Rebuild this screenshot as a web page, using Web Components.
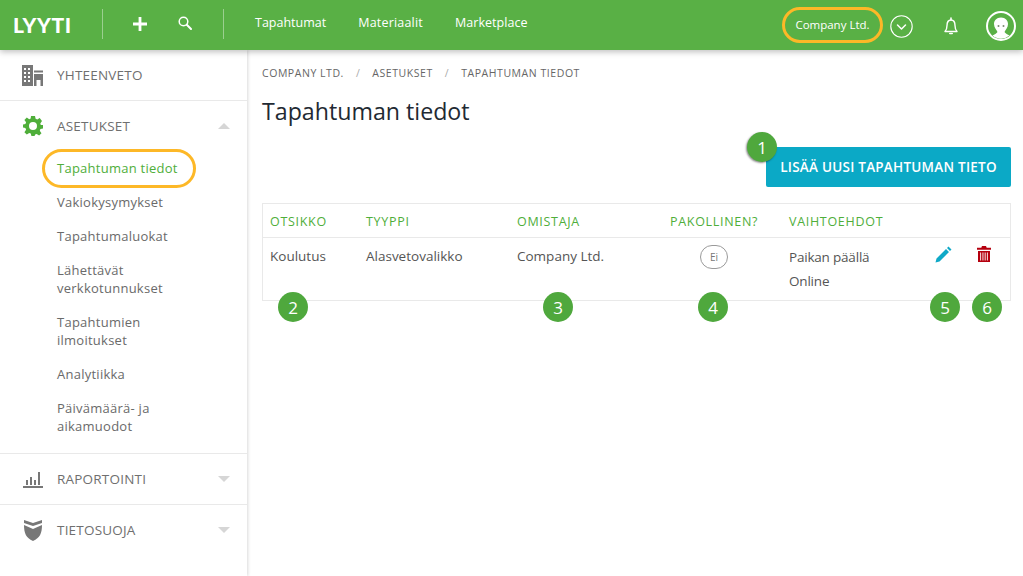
<!DOCTYPE html>
<html lang="fi"><head><meta charset="utf-8"><title>Tapahtuman tiedot</title>
<style>
html,body{margin:0;height:100%;background:#fff}
body{font-family:"Open Sans","Noto Sans","Liberation Sans",sans-serif;overflow:hidden}
</style></head><body>
<ly-app>
  <ly-topbar slot="top"></ly-topbar>
  <ly-sidebar slot="side"></ly-sidebar>
  <ly-main slot="main"></ly-main>
</ly-app>
<script>
const FONT='"Open Sans","Noto Sans","Liberation Sans",sans-serif';
function def(name,html,setup){
  customElements.define(name,class extends HTMLElement{
    constructor(){super();this.attachShadow({mode:'open'}).innerHTML=typeof html==='function'?html(this):html;}
    connectedCallback(){if(setup)setup(this);}
  });
}
def('ly-app',`<style>
:host{display:grid;grid-template-columns:247px 1fr;grid-template-rows:50px 1fr;height:576px;width:1023px;overflow:hidden}
.t{grid-column:1/3;position:relative;z-index:2}
.s{position:relative;z-index:1}
</style>
<div class="t"><slot name="top"></slot></div>
<div class="s"><slot name="side"></slot></div>
<div><slot name="main"></slot></div>`);

def('ly-topbar',`<style>
:host{display:flex;align-items:center;height:50px;background:#59b045;color:#fff;box-shadow:0 2px 6px rgba(0,0,0,.25);font:500 12.500px ${FONT}}
.logo{font:900 21px "Lato",sans-serif;letter-spacing:.6px;margin-left:13px;width:89px;line-height:1;padding-bottom:2px}
.sep{width:1px;height:30px;background:rgba(255,255,255,.4);margin-top:-2px}
.plus{margin-left:30px;display:flex;margin-top:-2px}
.search{margin-left:31px;display:flex;margin-top:-4px}
.sep2{margin-left:31px}
nav{display:flex;gap:32px;margin-left:31px;margin-top:-6px}
nav span:nth-child(2){letter-spacing:.2px}
nav span:nth-child(3){letter-spacing:.05px}
.co{margin-left:auto;box-sizing:border-box;width:101px;height:36px;border:3px solid #fdb827;border-radius:18px;display:flex;align-items:center;justify-content:center;padding-bottom:2px;font-size:11.500px;white-space:nowrap}
.chev{margin-left:7px;display:flex;margin-top:2px}
.bell{margin-left:31px;display:flex;margin-top:2px}
.ava{margin-left:28px;margin-right:7px;display:flex;margin-top:2px}
</style>
<div class="logo">LYYTI</div><div class="sep"></div>
<div class="plus"><svg width="14" height="14" viewBox="0 0 14 14"><path d="M5.6 0h2.8v5.6H14v2.8H8.400V14H5.600V8.400H0V5.600h5.600z" fill="#fff"/></svg></div>
<div class="search"><svg width="14" height="14" viewBox="0 0 14 14" fill="none" stroke="#fff"><circle cx="5.500" cy="5.500" r="4.300" stroke-width="1.500"/><path d="M8.800 8.800l4.200 4.200" stroke-width="2" stroke-linecap="round"/></svg></div>
<div class="sep sep2"></div>
<nav><span>Tapahtumat</span><span>Materiaalit</span><span>Marketplace</span></nav>
<div class="co">Company Ltd.</div>
<div class="chev"><svg width="23" height="23" viewBox="0 0 23 23" fill="none" stroke="#fff"><circle cx="11.500" cy="11.500" r="10.700" stroke-width="1.100"/><path d="M7.500 10l4 4 4-4" stroke-width="1.500" stroke-linecap="round" stroke-linejoin="round"/></svg></div>
<div class="bell"><svg width="14" height="18" viewBox="0 0 14 18" fill="none" stroke="#fff" stroke-width="1.400"><path d="M1 14.500c1.500-1.500 2-2.500 2-6C3 5.500 4.500 3 7 3s4 2.500 4 5.500c0 3.500.5 4.500 2 6z" stroke-linejoin="round"/><path d="M7 1v2M5.800 16.500h2.400" stroke-linecap="round" stroke-width="1.600"/></svg></div>
<div class="ava"><svg width="30" height="30" viewBox="0 0 30 30"><circle cx="15" cy="15" r="14" fill="#59b045" stroke="#fff" stroke-width="2"/><path d="M15 6.500c4.500 0 7 3 7 6.500 0 3.500-2.500 5.500-3.500 8 1 1.500 3 2.500 5 3.500a13 13 0 0 1-17 0c2-1 4-2 5-3.500-1-2.500-3.500-4.500-3.500-8 0-3.500 2.500-6.500 7-6.500z" fill="#fff"/><circle cx="12.500" cy="15" r="1" fill="#7a8a70"/><circle cx="17.500" cy="15" r="1" fill="#7a8a70"/></svg></div>`);

def('ly-navgroup',h=>`<style>
:host{display:block;border-bottom:1px solid #e9e9e9;color:#6f6f6f}
.row{display:flex;align-items:center;height:50px;padding-left:22px;font:400 13.500px ${FONT};letter-spacing:.2px}
.ic{width:21px;height:21px;display:flex;align-items:center;justify-content:center;margin-right:14px}
.lab{flex:1}
.car{width:0;height:0;border-left:6px solid transparent;border-right:6px solid transparent;margin-right:17px}
.car.d{border-top:6px solid #d6d6d6}
.car.u{border-bottom:6px solid #d6d6d6}
.car.n{display:none}
</style>
<div class="row"><span class="ic"><slot name="icon"></slot></span><span class="lab">${h.getAttribute('label')}</span><span class="car ${h.getAttribute('caret')||'n'}"></span></div>
<slot></slot>`);

def('ly-subitem',h=>`<style>
:host{display:block;padding:8px 0 8px 57px;font:400 13px/18px ${FONT};letter-spacing:.25px;color:#6a6a6a}
:host([active]){color:#4fae3a;padding:8px 0 8px 57px;position:relative}
.ring{display:none;position:absolute;left:42px;top:-2px;width:154px;height:39px;box-sizing:border-box;border:3px solid #fdb827;border-radius:20px}
:host([active]) .ring{display:block}
</style><slot></slot><span class="ring"></span>`);

def('ly-sidebar',`<style>
:host{display:block;width:247px;height:526px;background:#fff;box-shadow:1px 0 3px rgba(0,0,0,.15);box-sizing:border-box}
.list{padding-bottom:10px}
</style>
<ly-navgroup label="YHTEENVETO">
 <svg slot="icon" width="21" height="21" viewBox="0 0 21 21" fill="#777"><path fill-rule="evenodd" d="M0 0h11v21H0zM2 3v2h2V3zM6 3v2h2V3zM2 7v2h2V7zM6 7v2h2V7zM2 11v2h2v-2zM6 11v2h2v-2zM2 15v2h2v-2zM6 15v2h2v-2z"/><path d="M12 5.500h9v2h-9zM12 9h9v12h-2.500v-6h-4v6H12z"/></svg>
</ly-navgroup>
<ly-navgroup label="ASETUKSET" caret="u">
 <svg slot="icon" width="20" height="20" viewBox="0 0 20 20"><path fill="#4fae3a" fill-rule="evenodd" d="M8 0h4l.6 2.800 1.700.7L16.700 2l2.300 3-1.700 2.400.5 1.600H20v3.500l-2.600.6-.6 1.700 1.700 2.400-2.400 2.400-2.400-1.700-1.600.6L11.600 20H8.400l-.6-2.500-1.600-.6-2.400 1.700-2.400-2.400 1.700-2.400-.7-1.700L0 11.500V8.500l2.400-.6.7-1.700-1.700-2.300L3.800 1.500l2.400 1.700 1.500-.7zM10 6a4 4 0 1 0 0 8 4 4 0 0 0 0-8z"/></svg>
 <div class="list">
 <ly-subitem active>Tapahtuman tiedot</ly-subitem>
 <ly-subitem>Vakiokysymykset</ly-subitem>
 <ly-subitem>Tapahtumaluokat</ly-subitem>
 <ly-subitem>Lähettävät<br>verkkotunnukset</ly-subitem>
 <ly-subitem>Tapahtumien<br>ilmoitukset</ly-subitem>
 <ly-subitem>Analytiikka</ly-subitem>
 <ly-subitem>Päivämäärä- ja<br>aikamuodot</ly-subitem>
 </div>
</ly-navgroup>
<ly-navgroup label="RAPORTOINTI" caret="d">
 <svg slot="icon" width="20" height="20" viewBox="0 0 20 20" fill="#777"><path d="M0 17h20v2H0zM3 11h2v5H3zM7 8h2v8H7zM11 11h2v5h-2zM15 3h2v13h-2z"/></svg>
</ly-navgroup>
<ly-navgroup label="TIETOSUOJA" caret="d" style="border-bottom:0">
 <svg slot="icon" width="20" height="21" viewBox="0 0 20 21" fill="#777"><path d="M1 0l9 3 9-3v3l-9 3-9-3z"/><path d="M1 5l9 4 9-4c0 8-2 13-9 16C3 18 1 13 1 5z"/></svg>
</ly-navgroup>`);

def('ly-marker',h=>`<style>
:host{position:absolute;left:${h.getAttribute('x')}px;top:${h.getAttribute('y')}px;width:30px;height:30px;border-radius:50%;background:#4fa83d;color:#fff;display:flex;align-items:center;justify-content:center;font:400 17px "Open Sans",sans-serif;z-index:3;${h.hasAttribute('shadow')?'box-shadow:-1px 1px 2px rgba(0,0,0,.45);':''}}
</style><slot></slot>`);

def('ly-table',`<style>
:host{display:block;border:1px solid #e9e9e9;height:96px;box-sizing:content-box}
.g{display:grid;grid-template-columns:103px 151px 153px 119px 146px 41px 1fr}
.h{height:33px;border-bottom:1px solid #e9e9e9;align-items:center}
.h span{font:400 12.500px ${FONT};letter-spacing:.7px;color:#4fae3a;padding-top:1px}
.b{color:#555;font:400 13.500px/24px ${FONT};padding-top:6px}
.h span:first-child,.b>div:first-child{padding-left:7px}
.pill{display:inline-flex;align-items:center;justify-content:center;box-sizing:border-box;width:28px;height:24px;border:1px solid #9a9a9a;border-radius:12px;font-size:10px;line-height:1;color:#777;margin-left:30px}
.ic{padding-top:2px;display:block}
.opts{padding-top:1px;letter-spacing:-.2px}
</style>
<div class="g h"><span>OTSIKKO</span><span>TYYPPI</span><span>OMISTAJA</span><span>PAKOLLINEN?</span><span>VAIHTOEHDOT</span><span></span><span></span></div>
<div class="g b"><div>Koulutus</div><div>Alasvetovalikko</div><div>Company Ltd.</div><div><span class="pill">Ei</span></div><div class="opts">Paikan päällä<br>Online</div>
<div><svg class="ic" width="17" height="17" viewBox="0 0 17 17" fill="#0fa9c7"><path d="M13.500.5l3 3L15 5l-3-3zM11 3l3 3-9.500 9.500-4 1 1-4z"/></svg></div>
<div><svg class="ic" style="margin-left:1px" width="14" height="16" viewBox="0 0 14 16" fill="#b5000e"><path fill-rule="evenodd" d="M5 0h4l.7 1.700H14v2H0v-2h4.300zM1 5h12v11H1zM3.200 6.500v8h.9v-8zM5.500 6.500v8h.9v-8zM7.700 6.500v8h.9v-8zM9.900 6.500v8h.9v-8z"/></svg></div></div>`);

def('ly-main',`<style>
:host{display:block;position:relative;height:526px;padding:0 12px 0 15px;color:#212b32}
.crumb{display:flex;gap:12px;padding-top:17px;font:400 10.500px/12px ${FONT};letter-spacing:.55px;color:#666;height:12px}
.crumb i{font-style:normal;color:#aaa}
h1{margin:0;padding-top:18px;font:400 23.200px/28px ${FONT};color:#1f2a33;height:28px}
.act{display:flex;justify-content:flex-end;margin-top:22px}
button{all:unset;box-sizing:border-box;width:245px;height:40px;background:#0ba9c6;color:#fff;border-radius:2px;font:600 13.500px/40px ${FONT};text-align:center;white-space:nowrap;letter-spacing:.25px}
ly-table{margin-top:16px}
</style>
<div class="crumb"><span>COMPANY LTD.</span><i>/</i><span>ASETUKSET</span><i>/</i><span>TAPAHTUMAN TIEDOT</span></div>
<h1>Tapahtuman tiedot</h1>
<div class="act"><button>LISÄÄ UUSI TAPAHTUMAN TIETO</button></div>
<ly-table></ly-table>
<ly-marker x="500" y="82" shadow>1</ly-marker>
<ly-marker x="31" y="242">2</ly-marker>
<ly-marker x="296" y="242">3</ly-marker>
<ly-marker x="451" y="242">4</ly-marker>
<ly-marker x="683" y="242">5</ly-marker>
<ly-marker x="725" y="242">6</ly-marker>`);
</script>
</body></html>
